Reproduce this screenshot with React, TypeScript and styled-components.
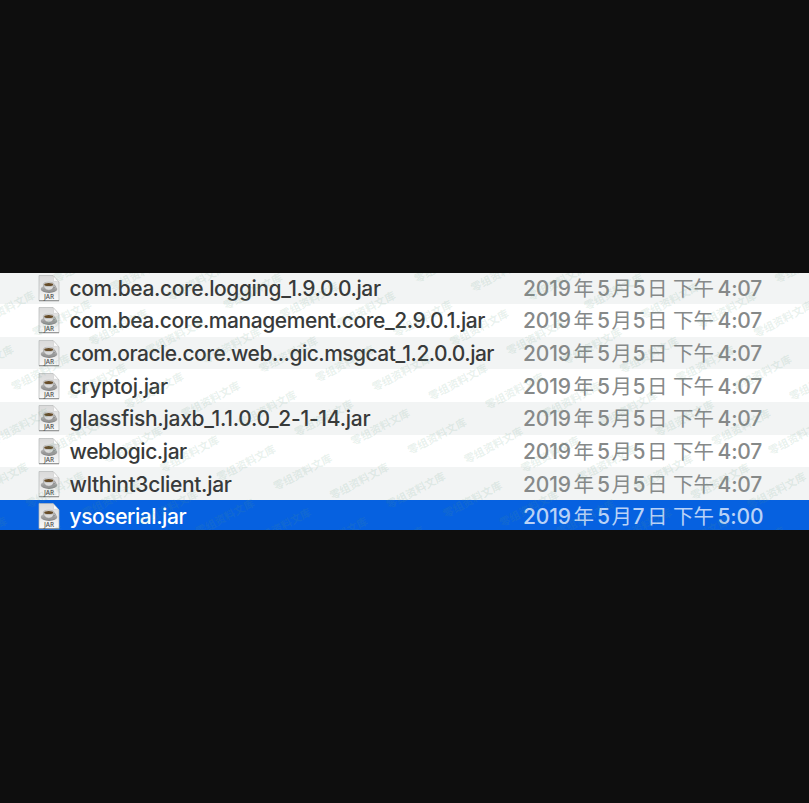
import React from 'react';
import styled, { createGlobalStyle } from 'styled-components';

const GlobalStyle = createGlobalStyle`
  body { margin: 0; background: #0e0e0e; }
`;

const Page = styled.main`
  box-sizing: border-box;
  height: 803px;
  padding-top: 273px;
  background: #0e0e0e;
  overflow: hidden;
`;

const FileList = styled.section`
  position: relative;
  display: flex;
  flex-direction: column;
  width: 809px;
  height: 257px;
  overflow: hidden;
  background: #ffffff;
`;

const Row = styled.div<{ $striped: boolean; $selected: boolean }>`
  flex: none;
  display: grid;
  grid-template-columns: 22px 454px 1fr;
  align-items: center;
  box-sizing: border-box;
  height: 32.67px;
  padding-left: 38px;
  background: ${p => (p.$selected ? '#0661e0' : p.$striped ? '#f2f4f4' : '#ffffff')};
  color: ${p => (p.$selected ? '#ffffff' : '#383a3a')};
  font-family: Inter, 'Noto Sans CJK SC', sans-serif;
  font-size: 21px;
  line-height: 32px;
  white-space: nowrap;

  &:first-child {
    margin-top: -1.67px;
  }
`;

const FileName = styled.span<{ $tracking: number; $selected: boolean }>`
  padding-left: 9.6px;
  height: 30px;
  font-weight: ${p => (p.$selected ? 500 : 450)};
  letter-spacing: ${p => p.$tracking}px;
`;

const Modified = styled.span<{ $selected: boolean }>`
  display: flex;
  align-items: flex-start;
  padding-left: 9px;
  height: 30px;
  color: ${p => (p.$selected ? '#b9d2f7' : '#868989')};
`;

const Part = styled.span<{ $width: number; $cjk?: boolean }>`
  width: ${p => p.$width}px;
  font-family: ${p => (p.$cjk ? "'Noto Sans CJK SC'" : 'Inter')}, sans-serif;
  font-size: ${p => (p.$cjk ? 20.5 : 21)}px;
  font-weight: ${p => (p.$cjk ? 400 : 450)};
  letter-spacing: ${p => (p.$cjk ? 0 : -0.15)}px;
  line-height: ${p => (p.$cjk ? 28 : 32)}px;
  white-space: pre;
`;

const Icon = styled.svg`
  display: block;
  width: 22px;
  height: 28px;
`;

const Watermark = styled.svg`
  position: absolute;
  inset: 0;
  pointer-events: none;
`;

const WatermarkText = styled.text`
  font-family: 'Noto Sans CJK SC', sans-serif;
  font-size: 10.8px;
  font-weight: 700;
  fill: #5c9a7c;
  fill-opacity: 0.14;
`;

function JarIcon() {
  return (
    <Icon viewBox="0 0 22 28">
      <defs>
        <linearGradient id="paper" x1="0" y1="0" x2="0" y2="1">
          <stop offset="0" stopColor="#dadada" />
          <stop offset="0.55" stopColor="#e8e8e8" />
          <stop offset="1" stopColor="#fafafa" />
        </linearGradient>
        <linearGradient id="saucer" x1="0" y1="0" x2="0" y2="1">
          <stop offset="0" stopColor="#c4c4c4" />
          <stop offset="1" stopColor="#808080" />
        </linearGradient>
      </defs>
      <path d="M1 1.5H15L21 8V26.7H1Z" fill="url(#paper)" stroke="#b5b7b7" strokeWidth="0.7" />
      <path d="M1 26.7H21" stroke="#8b8d8d" strokeWidth="1" />
      <path d="M15 1.5C16 4 15.8 6 15.2 7.4C17.5 7 19.5 7.2 21 8Z" fill="#fff" stroke="#c2c2c2" strokeWidth="0.5" />
      <ellipse cx="11" cy="15" rx="8.3" ry="3.9" fill="url(#saucer)" />
      <ellipse cx="11" cy="15.6" rx="6" ry="2" fill="#999" />
      <path d="M5.4 10.6C5.5 14 7.5 16.2 10.8 16.2S15.9 14 16 10.6Z" fill="#dcdcdc" stroke="#8a8a8a" strokeWidth="0.5" />
      <path d="M15.6 11.4C18.5 11 18 14 15 13.8" fill="none" stroke="#8a8a8a" strokeWidth="0.8" />
      <ellipse cx="10.7" cy="10.3" rx="5.3" ry="2.1" fill="#e2e2e2" stroke="#8c8c8c" strokeWidth="0.4" />
      <ellipse cx="10.7" cy="10.5" rx="4.5" ry="1.5" fill="#654b28" />
      <text x="11" y="25.2" textAnchor="middle" fontFamily="Open Sans, sans-serif" fontWeight="600" fontSize="6.4" fill="#555">JAR</text>
    </Icon>
  );
}

interface FileEntry {
  name: string;
  day: string;
  time: string;
  tracking: number;
}

const files: FileEntry[] = [
  { name: 'com.bea.core.logging_1.9.0.0.jar', day: '5', time: '4:07', tracking: -0.41 },
  { name: 'com.bea.core.management.core_2.9.0.1.jar', day: '5', time: '4:07', tracking: -0.43 },
  { name: 'com.oracle.core.web...gic.msgcat_1.2.0.0.jar', day: '5', time: '4:07', tracking: -0.52 },
  { name: 'cryptoj.jar', day: '5', time: '4:07', tracking: -0.36 },
  { name: 'glassfish.jaxb_1.1.0.0_2-1-14.jar', day: '5', time: '4:07', tracking: -0.26 },
  { name: 'weblogic.jar', day: '5', time: '4:07', tracking: -0.44 },
  { name: 'wlthint3client.jar', day: '5', time: '4:07', tracking: -0.31 },
  { name: 'ysoserial.jar', day: '7', time: '5:00', tracking: -0.45 },
];

const marks: { x: number; y: number }[] = [];
for (let row = -5; row <= 3; row++) {
  for (let col = -10; col <= 11; col++) {
    const x = 356.5 + col * 56.6 - row * 21.1;
    const y = 166.7 + col * 9.1 + row * 54.2;
    if (x > -60 && x < 809 && y > -6 && y < 285) marks.push({ x, y });
  }
}

export default function App() {
  return (
    <>
      <GlobalStyle />
      <Page>
        <FileList>
          {files.map((file, i) => {
            const selected = i === files.length - 1;
            return (
              <Row key={file.name} $striped={i % 2 === 0} $selected={selected}>
                <JarIcon />
                <FileName $tracking={file.tracking} $selected={selected}>{file.name}</FileName>
                <Modified $selected={selected}>
                  <Part $width={50.5}>2019</Part>
                  <Part $width={23.5} $cjk>年</Part>
                  <Part $width={14.5}>5</Part>
                  <Part $width={21} $cjk>月</Part>
                  <Part $width={14.5}>{file.day}</Part>
                  <Part $width={26} $cjk>日 </Part>
                  <Part $width={44.5} $cjk>下午</Part>
                  <Part $width={46}>{file.time}</Part>
                </Modified>
              </Row>
            );
          })}
          <Watermark width="809" height="257">
            {marks.map(({ x, y }) => (
              <WatermarkText key={`${x},${y}`} transform={`translate(${x} ${y}) rotate(-28)`} x="-5.4" y="4">
                零组资料文库
              </WatermarkText>
            ))}
          </Watermark>
        </FileList>
      </Page>
    </>
  );
}
